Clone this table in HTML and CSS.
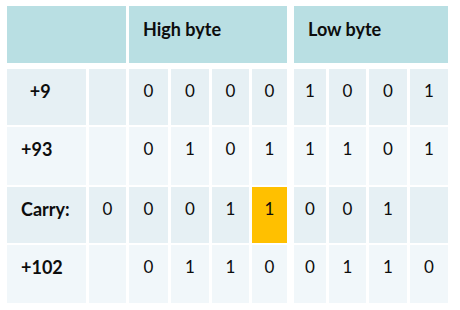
FILE: index.html
```html
<!DOCTYPE html>
<html>
<head>
<meta charset="utf-8">
<link rel="stylesheet" href="styles.css">
</head>
<body>
<div class="table">
  <div class="cell head span2"></div>
  <div class="cell head span4 title">High byte</div>
  <div class="cell head span4 title lo">Low byte</div>

  <div class="cell a label">&nbsp;&nbsp;+9</div>
  <div class="cell a"></div>
  <div class="cell a num">0</div>
  <div class="cell a num">0</div>
  <div class="cell a num">0</div>
  <div class="cell a num">0</div>
  <div class="cell a num lo">1</div>
  <div class="cell a num">0</div>
  <div class="cell a num">0</div>
  <div class="cell a num">1</div>

  <div class="cell b label">+93</div>
  <div class="cell b"></div>
  <div class="cell b num">0</div>
  <div class="cell b num">1</div>
  <div class="cell b num">0</div>
  <div class="cell b num">1</div>
  <div class="cell b num lo">1</div>
  <div class="cell b num">1</div>
  <div class="cell b num">0</div>
  <div class="cell b num">1</div>

  <div class="cell a label">Carry:</div>
  <div class="cell a num">0</div>
  <div class="cell a num">0</div>
  <div class="cell a num">0</div>
  <div class="cell a num">1</div>
  <div class="cell hl num">1</div>
  <div class="cell a num lo">0</div>
  <div class="cell a num">0</div>
  <div class="cell a num">1</div>
  <div class="cell a"></div>

  <div class="cell b label">+102</div>
  <div class="cell b"></div>
  <div class="cell b num">0</div>
  <div class="cell b num">1</div>
  <div class="cell b num">1</div>
  <div class="cell b num">0</div>
  <div class="cell b num lo">0</div>
  <div class="cell b num">1</div>
  <div class="cell b num">1</div>
  <div class="cell b num">0</div>
</div>
</body>
</html>
```
FILE: styles.css
```css
html, body {
  margin: 0;
  padding: 0;
  background: #ffffff;
}
body {
  padding: 6px 0 0 7px;
  font-family: Lato, "Liberation Sans", sans-serif;
  font-size: 17px;
  color: #0d0d0d;
}
.table {
  display: grid;
  grid-template-columns: 79px 37px 39px 38px 37px 35px 36px 37px 38px 38px;
  grid-template-rows: 61px 56px 58px 56px 58px;
  column-gap: 3px;
  row-gap: 2px;
  width: 445px;
}
.cell {
  box-sizing: border-box;
  padding-top: 12px;
  line-height: 20px;
}
.head {
  background: #b9dfe3;
  margin-bottom: 4px;
  font-weight: bold;
  padding-top: 13px;
  font-size: 18px;
}
.span2 { grid-column: span 2; }
.span4 { grid-column: span 4; }
.title { padding-left: 14px; }
.lo { margin-left: 4px; }
.a { background: #e6f0f4; }
.b { background: #f1f7fa; }
.hl { background: #ffc000; }
.num { text-align: center; }
.label {
  font-weight: bold;
  font-size: 18px;
  padding-left: 14px;
}
```
